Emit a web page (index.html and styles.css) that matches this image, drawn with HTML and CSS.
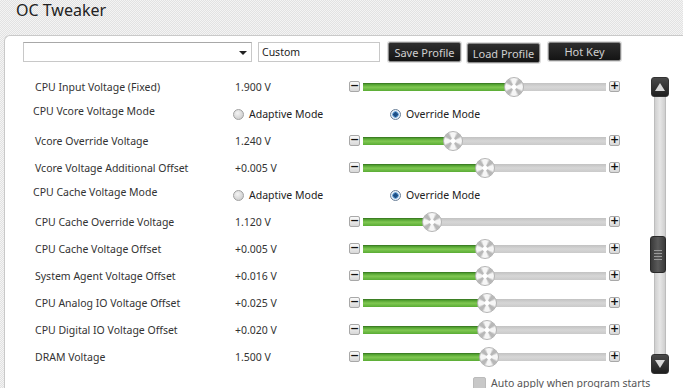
FILE: index.html
```html
<!DOCTYPE html>
<html>
<head>
<meta charset="utf-8">
<link rel="stylesheet" href="styles.css">
</head>
<body>
<div class="title">OC Tweaker</div>
<div class="panel">
  <div class="toolbar">
    <div class="dropdown"><span class="caret"></span></div>
    <div class="input">Custom</div>
    <button class="btn btn-save">Save Profile</button>
    <button class="btn btn-load">Load Profile</button>
    <button class="btn btn-hot">Hot Key</button>
  </div>
  <div class="content">
    <div class="rows">
      <div class="row">
        <div class="label">CPU Input Voltage (Fixed)</div>
        <div class="value">1.900 V</div>
        <div class="slider"><span class="step">&minus;</span><div class="track"><div class="fill" style="width:62%"></div><span class="thumb" style="left:62%"></span></div><span class="step">+</span></div>
      </div>
      <div class="row mode">
        <div class="label">CPU Vcore Voltage Mode</div>
        <div class="radios"><span class="radio"><span class="dot"></span>Adaptive Mode</span><span class="radio on"><span class="dot"></span>Override Mode</span></div>
      </div>
      <div class="row">
        <div class="label">Vcore Override Voltage</div>
        <div class="value">1.240 V</div>
        <div class="slider"><span class="step">&minus;</span><div class="track"><div class="fill" style="width:37%"></div><span class="thumb" style="left:37%"></span></div><span class="step">+</span></div>
      </div>
      <div class="row">
        <div class="label">Vcore Voltage Additional Offset</div>
        <div class="value">+0.005 V</div>
        <div class="slider"><span class="step">&minus;</span><div class="track"><div class="fill" style="width:50%"></div><span class="thumb" style="left:50%"></span></div><span class="step">+</span></div>
      </div>
      <div class="row mode">
        <div class="label">CPU Cache Voltage Mode</div>
        <div class="radios"><span class="radio"><span class="dot"></span>Adaptive Mode</span><span class="radio on"><span class="dot"></span>Override Mode</span></div>
      </div>
      <div class="row">
        <div class="label">CPU Cache Override Voltage</div>
        <div class="value">1.120 V</div>
        <div class="slider"><span class="step">&minus;</span><div class="track"><div class="fill" style="width:28.5%"></div><span class="thumb" style="left:28.5%"></span></div><span class="step">+</span></div>
      </div>
      <div class="row">
        <div class="label">CPU Cache Voltage Offset</div>
        <div class="value">+0.005 V</div>
        <div class="slider"><span class="step">&minus;</span><div class="track"><div class="fill" style="width:50%"></div><span class="thumb" style="left:50%"></span></div><span class="step">+</span></div>
      </div>
      <div class="row">
        <div class="label">System Agent Voltage Offset</div>
        <div class="value">+0.016 V</div>
        <div class="slider"><span class="step">&minus;</span><div class="track"><div class="fill" style="width:50%"></div><span class="thumb" style="left:50%"></span></div><span class="step">+</span></div>
      </div>
      <div class="row">
        <div class="label">CPU Analog IO Voltage Offset</div>
        <div class="value">+0.025 V</div>
        <div class="slider"><span class="step">&minus;</span><div class="track"><div class="fill" style="width:51%"></div><span class="thumb" style="left:51%"></span></div><span class="step">+</span></div>
      </div>
      <div class="row">
        <div class="label">CPU Digital IO Voltage Offset</div>
        <div class="value">+0.020 V</div>
        <div class="slider"><span class="step">&minus;</span><div class="track"><div class="fill" style="width:51%"></div><span class="thumb" style="left:51%"></span></div><span class="step">+</span></div>
      </div>
      <div class="row">
        <div class="label">DRAM Voltage</div>
        <div class="value">1.500 V</div>
        <div class="slider"><span class="step">&minus;</span><div class="track"><div class="fill" style="width:52%"></div><span class="thumb" style="left:52%"></span></div><span class="step">+</span></div>
      </div>
      <div class="auto"><span class="check"></span>Auto apply when program starts</div>
    </div>
    <div class="scrollbar">
      <div class="sbtn"><svg width="10" height="8" viewBox="0 0 10 8"><path d="M5 0 L10 8 L0 8 Z" fill="#d8d8d8"/></svg></div>
      <div class="sbtrack"><div class="sbthumb"><span></span><span></span><span></span><span></span></div></div>
      <div class="sbtn"><svg width="10" height="8" viewBox="0 0 10 8"><path d="M0 0 L10 0 L5 8 Z" fill="#d8d8d8"/></svg></div>
    </div>
  </div>
</div>
</body>
</html>
```
FILE: styles.css
```css
html, body {
  margin: 0;
  height: 100%;
  overflow: hidden;
}
body {
  font-family: "Noto Sans", "DejaVu Sans", sans-serif;
  color: #333;
  background-color: #ececec;
  background-image: repeating-conic-gradient(#e2e2e2 0 25%, #f4f4f4 0 50%);
  background-size: 2px 2px;
}
.title {
  height: 35px;
  padding-left: 16px;
  font-size: 16px;
  line-height: 20px;
  color: #222;
  box-sizing: border-box;
}
.panel {
  margin-left: 4px;
  height: 360px;
  background: #fff;
  border: 1px solid #c9c9c9;
  border-right: none;
  border-bottom: none;
  border-radius: 6px 0 0 0;
  box-sizing: border-box;
  font-size: 10.5px;
}
.toolbar {
  display: flex;
  align-items: flex-start;
  padding: 6px 0 0 18px;
  height: 37px;
  box-sizing: border-box;
}
.dropdown {
  width: 229px;
  height: 20px;
  box-sizing: border-box;
  border: 1px solid #c8c8c8;
  border-top-color: #a8a8a8;
  background: #fff;
  position: relative;
}
.caret {
  position: absolute;
  right: 4px;
  top: 8px;
  border-left: 4px solid transparent;
  border-right: 4px solid transparent;
  border-top: 4px solid #222;
}
.input {
  margin-left: 6px;
  width: 122px;
  height: 20px;
  box-sizing: border-box;
  border: 1px solid #c8c8c8;
  padding-left: 3px;
  line-height: 18px;
  font-size: 10.5px;
  color: #222;
}
.btn {
  width: 73px;
  height: 20px;
  padding: 0;
  margin-left: 8px;
  background: linear-gradient(#2e2e2e, #141414);
  border: 1px solid #8a8a8a;
  border-radius: 2px;
  color: #cfcfcf;
  font-family: "Noto Sans", "DejaVu Sans", sans-serif;
  font-size: 11px;
  line-height: 17px;
  box-shadow: 0 0 0 1px #dcdcdc;
}
.btn-load {
  margin-left: 6px;
  margin-top: 1px;
}
.btn-hot {
  margin-left: 8px;
  height: 19px;
  line-height: 15px;
}
.content {
  display: flex;
}
.rows {
  width: 646px;
}
.row {
  display: flex;
  align-items: center;
  height: 27px;
  padding-left: 30px;
}
.label {
  width: 200px;
  flex: none;
  color: #333;
}
.value {
  width: 114px;
  flex: none;
  color: #333;
}
.mode .label {
  margin-left: -2px;
  margin-top: -5px;
  width: 200px;
}
.radios {
  display: flex;
  margin-top: 1px;
}
.radio {
  display: flex;
  align-items: center;
  width: 157px;
  color: #222;
}
.dot {
  width: 11px;
  height: 11px;
  border-radius: 50%;
  border: 1px solid #a0a0a0;
  background: radial-gradient(circle at 40% 35%, #f4f4f4, #c4c4c4);
  margin-right: 5px;
  box-sizing: border-box;
}
.radio.on .dot {
  background: radial-gradient(circle, #1d4f86 0 2px, #6fa6d8 2.5px 3px, #e8f0f8 3.5px);
  border-color: #6a7f98;
}
.slider {
  display: flex;
  align-items: center;
}
.step {
  width: 11px;
  height: 11px;
  box-sizing: border-box;
  border: 1px solid #a8a8a8;
  border-radius: 2px;
  background: linear-gradient(#fafafa, #d8d8d8);
  color: #111;
  font-size: 11px;
  font-weight: bold;
  line-height: 8px;
  text-align: center;
  font-family: "DejaVu Sans", sans-serif;
}
.track {
  position: relative;
  width: 243px;
  height: 8px;
  margin: 0 3px;
  background: linear-gradient(#c2c2c2, #d6d6d6 50%, #cacaca);
}
.fill {
  height: 100%;
  background: linear-gradient(#4a9a2a, #80c852 45%, #5aac35);
  border-top: 1px solid #3d7f24;
  box-sizing: border-box;
}
.thumb {
  position: absolute;
  top: -6px;
  width: 20px;
  height: 20px;
  margin-left: -10px;
  border-radius: 50%;
  box-sizing: border-box;
  border: 1px solid #b4b4b4;
  background:
    radial-gradient(circle, #fff 0 2px, transparent 3px),
    repeating-conic-gradient(from 45deg, #b8b8b8 0 10deg, #f6f6f6 28deg 62deg, #b8b8b8 80deg 90deg);
}
.auto {
  display: flex;
  align-items: center;
  margin-left: 468px;
  margin-top: 6px;
  color: #555;
  font-size: 10.5px;
  white-space: nowrap;
}
.check {
  width: 13px;
  height: 13px;
  background: #c8c8c8;
  border: 1px solid #bbb;
  box-sizing: border-box;
  border-radius: 2px;
  margin-right: 5px;
  flex: none;
}
.scrollbar {
  margin-top: 4px;
  width: 18px;
  display: flex;
  flex-direction: column;
  align-items: center;
}
.sbtn {
  width: 18px;
  height: 20px;
  box-sizing: border-box;
  border-radius: 3px;
  background: linear-gradient(#4a4a4a, #1e1e1e);
  border: 1px solid #333;
  display: flex;
  align-items: center;
  justify-content: center;
}
.sbtrack {
  width: 10px;
  height: 257px;
  background: linear-gradient(90deg, #cfcfcf, #e6e6e6 50%, #cfcfcf);
  border-left: 1px solid #bdbdbd;
  border-right: 1px solid #bdbdbd;
  position: relative;
}
.sbthumb {
  position: absolute;
  left: -5px;
  top: 139px;
  width: 16px;
  height: 37px;
  border-radius: 3px;
  background: linear-gradient(90deg, #3a3a3a, #5a5a5a 50%, #3a3a3a);
  border: 1px solid #2a2a2a;
  box-sizing: border-box;
  display: flex;
  flex-direction: column;
  justify-content: center;
  align-items: center;
  gap: 2px;
}
.sbthumb span {
  width: 8px;
  height: 1px;
  background: #9a9a9a;
}
```
